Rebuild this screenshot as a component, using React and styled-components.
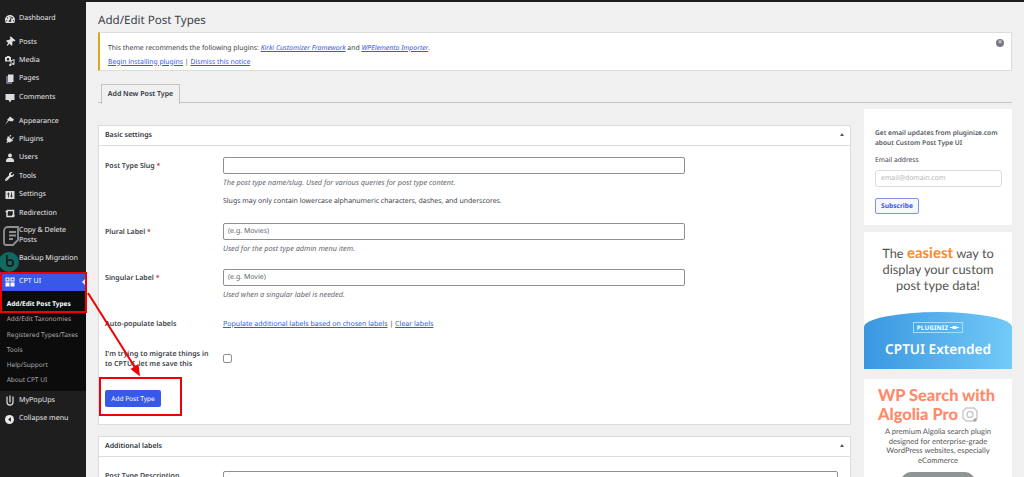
import styled, { createGlobalStyle } from 'styled-components';
import { FaTachometerAlt, FaThumbtack, FaWrench, FaPlug } from 'react-icons/fa';

const GlobalStyle = createGlobalStyle`
  html, body { margin: 0; padding: 0; background: #f0f0f1; }
  body { font-family: "Noto Sans", "Open Sans", sans-serif; color: #3c434a; text-rendering: geometricPrecision; }
  * { box-sizing: border-box; }
`;

const Page = styled.div`
  position: relative;
  width: 1024px;
  height: 477px;
  overflow: hidden;
  display: flex;
  flex-direction: column;
`;
const TopLine = styled.div`height: 2px; background: #1e1e1e; flex: none;`;
const Body = styled.div`display: flex; flex: 1; min-height: 0;`;

/* admin menu */
const Sidebar = styled.nav`
  width: 86px;
  flex: none;
  background: #1e1e1e;
  padding-top: 7.5px;
  font-size: 7.1px;
  color: #e8e8e9;
`;
const MenuItem = styled.div`
  display: flex;
  align-items: center;
  height: ${p => p.$h || 18.4}px;
  margin-top: ${p => p.$gap || 0}px;
  line-height: 9.6px;
  position: relative;
  background: ${p => (p.$active ? '#3858e9' : 'transparent')};
  color: ${p => (p.$active ? '#fff' : 'inherit')};
`;
const MenuLabel = styled.span`position: relative;`;
const IconSlot = styled.span`
  width: 19px;
  flex: none;
  display: flex;
  justify-content: center;
  color: #dcdcde;
  ${MenuItem}[data-active='true'] & { color: #fff; }
`;
const OversizeIcon = styled.svg`
  position: absolute;
  left: ${p => p.$left}px;
  top: ${p => p.$top}px;
`;
const ActiveNotch = styled.span`
  position: absolute;
  right: 0;
  top: 6px;
  border: 4px solid transparent;
  border-right-color: #f0f0f1;
  border-left-width: 0;
`;
const SubMenu = styled.div`
  background: #0c0c0c;
  height: 100px;
  padding: 4.8px 0 0 6.7px;
  color: #a9aaab;
  font-size: 6.5px;
`;
const SubItem = styled.div`
  height: 15.2px;
  line-height: 15.2px;
  white-space: nowrap;
  color: ${p => (p.$current ? '#fff' : 'inherit')};
  font-weight: ${p => (p.$current ? 700 : 400)};
`;
const PinIcon = styled(FaThumbtack)`transform: rotate(40deg);`;
const PlugIcon = styled(FaPlug)`transform: rotate(40deg);`;

/* content */
const Main = styled.main`
  flex: 1;
  min-width: 0;
  padding: 0 12px;
`;
const Title = styled.h1`
  margin: 0;
  height: 30px;
  padding-top: 10px;
  font-size: 11.6px;
  line-height: 18px;
  font-weight: 400;
  color: #3c434a;
`;
const Notice = styled.div`
  position: relative;
  height: 39px;
  background: #fff;
  border: 1px solid #dcdcde;
  border-left: 2px solid #dba617;
  padding: 8.5px 8px 0 8px;
  font-size: 6.85px;
  line-height: 14px;
`;
const Link = styled.a`
  color: #3858e9;
  text-decoration: underline;
  font-style: ${p => (p.$italic ? 'italic' : 'normal')};
`;
const NoticeClose = styled.span`
  position: absolute;
  right: 7px;
  top: 6px;
  width: 8px;
  height: 8px;
  border-radius: 50%;
  background: #787c82;
  color: #fff;
  font-size: 7px;
  line-height: 8px;
  text-align: center;
`;
const Tabs = styled.div`
  height: 32px;
  padding: 13px 0 0 3px;
  border-bottom: 1px solid #c3c4c7;
`;
const Tab = styled.div`
  width: 79px;
  height: 20px;
  background: #f0f0f1;
  border: 1px solid #c3c4c7;
  border-bottom: none;
  font-size: 7px;
  font-weight: 600;
  line-height: 19px;
  text-align: center;
  color: #2c3338;
`;
const Columns = styled.div`
  display: flex;
  gap: 13px;
  align-items: flex-start;
  margin-top: 6px;
`;
const FormColumn = styled.div`flex: 1; min-width: 0; padding-top: 16px;`;
const Panel = styled.section`
  background: #fff;
  border: 1px solid #dcdcde;
  margin-bottom: 11px;
  height: ${p => (p.$h ? `${p.$h}px` : 'auto')};
`;
const PanelHead = styled.div`
  position: relative;
  height: 20px;
  padding-left: 6px;
  border-bottom: 1px solid #dcdcde;
  font-size: 7px;
  font-weight: 600;
  line-height: 19px;
  color: #2c3338;
`;
const Toggle = styled.span`
  position: absolute;
  right: 6px;
  top: 7px;
  border: 2.5px solid transparent;
  border-top-width: 0;
  border-bottom: 3.5px solid #50575e;
`;
const PanelBody = styled.div`padding: ${p => p.$pt ?? 11}px 6px 0 6px;`;
const Row = styled.div`
  display: grid;
  grid-template-columns: 118px 1fr;
  margin-bottom: ${p => p.$mb || 0}px;
`;
const Label = styled.div`
  font-size: 7.05px;
  font-weight: 600;
  line-height: 10px;
  color: #3c434a;
  padding-top: ${p => p.$pt ?? 3.5}px;
`;
const Req = styled.span`color: #d63638;`;
const TextInput = styled.div`
  width: ${p => p.$w || 462}px;
  height: 17px;
  background: #fff;
  border: 1px solid #8c8f94;
  border-radius: 2px;
  padding-left: 4px;
  font-size: 7px;
  line-height: 15px;
  color: #646970;
`;
const Help = styled.div`
  font-size: 7.3px;
  font-style: italic;
  line-height: 10px;
  margin-top: 3.5px;
  color: #646970;
`;
const Plain = styled.div`
  font-size: 6.95px;
  line-height: 10px;
  margin-top: 9.5px;
  color: #3c434a;
`;
const LinkLine = styled.div`font-size: 7.05px; line-height: 10px;`;
const Check = styled.div`
  width: 9px;
  height: 9px;
  margin-top: 5px;
  border: 1px solid #8c8f94;
  border-radius: 2px;
`;
const PrimaryButton = styled.button`
  display: block;
  width: 56px;
  height: 17px;
  padding: 0;
  border: none;
  border-radius: 2px;
  background: #3858e9;
  color: #fff;
  font-family: inherit;
  font-size: 6.5px;
  text-rendering: geometricPrecision;
`;

/* right column */
const Aside = styled.aside`
  width: 148px;
  flex: none;
  display: flex;
  flex-direction: column;
`;
const Card = styled.div`
  background: #fff;
  height: ${p => p.$h}px;
  margin-bottom: ${p => p.$mb || 0}px;
  overflow: hidden;
`;
const SubscribeBox = styled(Card)`padding: 19px 11px 0 11px;`;
const SubscribeText = styled.div`
  font-size: 6.6px;
  font-weight: 600;
  line-height: 10px;
  white-space: nowrap;
  color: #50575e;
`;
const EmailLabel = styled.div`
  font-size: 6.7px;
  line-height: 10px;
  margin-top: 7px;
`;
const EmailInput = styled.div`
  width: 127px;
  height: 17px;
  margin-top: 5px;
  padding-left: 5px;
  border: 1px solid #dcdcde;
  border-radius: 3px;
  font-size: 6.9px;
  line-height: 15px;
  color: #b5b7ba;
`;
const SubscribeButton = styled.div`
  width: 44px;
  height: 16px;
  margin-top: 11px;
  border: 1px solid #7f92f0;
  border-radius: 2px;
  font-size: 6.6px;
  font-weight: 700;
  line-height: 14px;
  text-align: center;
  color: #3858e9;
  background: #f6f7f7;
`;
const PromoCard = styled(Card)`
  display: flex;
  flex-direction: column;
`;
const PromoText = styled.div`
  flex: 1;
  padding-top: 12.5px;
  font-family: "Lato", sans-serif;
  font-size: 12.8px;
  line-height: 16px;
  text-align: center;
  color: #555;
`;
const Easiest = styled.span`color: #f58b2e; font-weight: 700; font-size: 15px;`;
const Banner = styled.div`
  height: 57px;
  background: linear-gradient(90deg, #3a97e0, #72caf8);
  border-radius: 50% 50% 0 0 / 15px 15px 0 0;
  padding-top: 10px;
  display: flex;
  flex-direction: column;
  align-items: center;
  color: #fff;
`;
const Badge = styled.div`
  display: flex;
  align-items: center;
  gap: 2px;
  height: 11px;
  padding: 0 3px;
  border: 1px solid #a9dcf8;
  font-size: 6.2px;
  font-weight: 700;
  letter-spacing: 0.2px;
`;
const BannerTitle = styled.div`
  margin-top: 7px;
  font-size: 13.6px;
  line-height: 18px;
  font-weight: 600;
`;
const AlgoliaCard = styled(Card)`padding: 7px 0 0 14px;`;
const AlgoliaTitle = styled.div`
  display: flex;
  align-items: center;
  font-family: "Lato", sans-serif;
  font-weight: 900;
  font-size: 16.4px;
  line-height: 19px;
  white-space: nowrap;
  color: #ff8a6b;
  svg { margin-left: 4px; }
`;
const AlgoliaText = styled.div`
  margin: 3px 0 0 -5px;
  width: 130px;
  font-family: "Lato", sans-serif;
  font-size: 7.6px;
  line-height: 9.7px;
  text-align: center;
  color: #555;
`;
const AlgoliaButton = styled.div`
  width: 74px;
  height: 20px;
  margin: 6px 0 0 23px;
  border-radius: 10px 10px 0 0;
  background: #8f9494;
`;

/* red marks drawn on the screenshot */
const RedBox = styled.div`
  position: absolute;
  left: ${p => p.$x}px;
  top: ${p => p.$y}px;
  width: ${p => p.$w}px;
  height: ${p => p.$h}px;
  border: 2px solid #f00000;
`;
const ArrowLayer = styled.svg`
  position: absolute;
  left: 0;
  top: 0;
  pointer-events: none;
`;

const Glyph = ({ w = 10, h = 10, vb = '0 0 20 20', children }) => (
  <svg width={w} height={h} viewBox={vb} fill="currentColor">{children}</svg>
);
const MediaIcon = () => (
  <Glyph w={11} h={10}>
    <path fillRule="evenodd" d="M1 2h3l1-2h5l1 2h2v9H1zM7 4a2.500 2.500 0 1 0 0 5 2.500 2.500 0 0 0 0-5z" />
    <path d="M17 7l3-1v10a2.500 2 0 1 1-2-2V9l-4 1v8a2.500 2 0 1 1-2-2v-7z" />
  </Glyph>
);
const PagesIcon = () => (
  <Glyph>
    <path d="M3 4h2v13h9v2H3z" fill="#b9b6d6" />
    <path d="M6 1h11v15H6z" />
  </Glyph>
);
const CommentIcon = () => (
  <Glyph>
    <path d="M1 2h18v12h-6l-3 5-3-5H1z" />
  </Glyph>
);
const BrushIcon = () => (
  <Glyph w={11} h={10}>
    <path d="M11 1l8 6-3 4-3-1-2 1-2-2-8 9 6-10-2-1 3-2z" />
  </Glyph>
);
const UserIcon = () => (
  <Glyph>
    <circle cx="10" cy="5" r="4" />
    <path d="M2 18v-3c0-3 3-5 5-5h6c2 0 5 2 5 5v3z" />
  </Glyph>
);
const SettingsIcon = () => (
  <Glyph>
    <path d="M1 2h18v16H1zM6 5v2H4.500v2H6v6h1.500V9H9V7H7.500V5zm6 0v6h-1.500v2H12v2h1.500v-2H15v-2h-1.500V5z" fillRule="evenodd" />
  </Glyph>
);
const RedirectIcon = () => (
  <svg width="10" height="9" viewBox="0 0 20 18" fill="none" stroke="currentColor" strokeWidth="3">
    <path d="M4 3h13v12H4V3" />
    <path d="M1 5h5M14 13h5" />
  </svg>
);
const GridIcon = () => (
  <Glyph>
    <path d="M1 1h8v8H1zM3 3v4h4V3z" fillRule="evenodd" />
    <path d="M11 1h8v8h-8zM13 3v4h4V3z" fillRule="evenodd" />
    <path d="M1 11h8v8H1zM11 11h8v8h-8z" />
  </Glyph>
);
const UIcon = () => (
  <svg width="8" height="11" viewBox="0 0 16 22" fill="none" stroke="currentColor" strokeWidth="2.500">
    <path d="M2 3v11a6 6 0 0 0 12 0V3M8 1v14" />
  </svg>
);
const CollapseIcon = () => (
  <svg width="9" height="9" viewBox="0 0 20 20">
    <circle cx="10" cy="10" r="10" fill="#e8e8e9" />
    <path d="M13 5v10l-6-5z" fill="#1e1e1e" />
  </svg>
);

const topItems = [
  { label: 'Posts', icon: <PinIcon size={10} />, gap: 5.4 },
  { label: 'Media', icon: <MediaIcon /> },
  { label: 'Pages', icon: <PagesIcon /> },
  { label: 'Comments', icon: <CommentIcon /> },
  { label: 'Appearance', icon: <BrushIcon />, gap: 5.4 },
  { label: 'Plugins', icon: <PlugIcon size={9} /> },
  { label: 'Users', icon: <UserIcon /> },
  { label: 'Tools', icon: <FaWrench size={9} /> },
  { label: 'Settings', icon: <SettingsIcon /> },
  { label: 'Redirection', icon: <RedirectIcon /> },
];
const subItems = ['Add/Edit Taxonomies', 'Registered Types/Taxes', 'Tools', 'Help/Support', 'About CPT UI'];

export default function App() {
  return (
    <Page>
      <GlobalStyle />
      <TopLine />
      <Body>
        <Sidebar>
          <MenuItem><IconSlot><FaTachometerAlt size={10} /></IconSlot>Dashboard</MenuItem>
          {topItems.map(item => (
            <MenuItem key={item.label} $gap={item.gap}>
              <IconSlot>{item.icon}</IconSlot>{item.label}
            </MenuItem>
          ))}
          <MenuItem $h={26}>
            <OversizeIcon $left={3} $top={3} width="17" height="20" viewBox="0 0 17 20" fill="none" stroke="#8f9091" strokeWidth="1.800">
              <path d="M5 1h10v13l-5 5H3a2 2 0 0 1-2-2V5a4 4 0 0 1 4-4z" />
              <path d="M6 6h7M6 9.500h7M6 13h4" />
            </OversizeIcon>
            <IconSlot /><MenuLabel>Copy &amp; Delete<br />Posts</MenuLabel>
          </MenuItem>
          <MenuItem $h={18.4} $gap={1}>
            <OversizeIcon $left={0} $top={2} width="19" height="20" viewBox="0 0 19 20">
              <circle cx="9" cy="10" r="10" fill="#12695f" />
              <circle cx="10" cy="11" r="3.200" fill="none" stroke="#1e1e1e" strokeWidth="1.800" />
              <path d="M6.800 3v8" stroke="#1e1e1e" strokeWidth="1.800" />
            </OversizeIcon>
            <IconSlot /><MenuLabel>Backup Migration</MenuLabel>
          </MenuItem>
          <MenuItem $active data-active="true" $gap={4} $h={19.5}>
            <IconSlot><GridIcon /></IconSlot>CPT UI
            <ActiveNotch />
          </MenuItem>
          <SubMenu>
            <SubItem $current>Add/Edit Post Types</SubItem>
            {subItems.map(s => <SubItem key={s}>{s}</SubItem>)}
          </SubMenu>
          <MenuItem><IconSlot><UIcon /></IconSlot>MyPopUps</MenuItem>
          <MenuItem><IconSlot><CollapseIcon /></IconSlot>Collapse menu</MenuItem>
        </Sidebar>

        <Main>
          <Title>Add/Edit Post Types</Title>
          <Notice>
            This theme recommends the following plugins: <Link $italic>Kirki Customizer Framework</Link> and <Link $italic>WPElemento Importer</Link>.
            <br />
            <Link>Begin installing plugins</Link> | <Link>Dismiss this notice</Link>
            <NoticeClose>×</NoticeClose>
          </Notice>
          <Tabs><Tab>Add New Post Type</Tab></Tabs>
          <Columns>
            <FormColumn>
              <Panel $h={300}>
                <PanelHead>Basic settings<Toggle /></PanelHead>
                <PanelBody>
                  <Row $mb={16}>
                    <Label>Post Type Slug <Req>*</Req></Label>
                    <div>
                      <TextInput />
                      <Help>The post type name/slug. Used for various queries for post type content.</Help>
                      <Plain>Slugs may only contain lowercase alphanumeric characters, dashes, and underscores.</Plain>
                    </div>
                  </Row>
                  <Row $mb={15.5}>
                    <Label>Plural Label <Req>*</Req></Label>
                    <div>
                      <TextInput>(e.g. Movies)</TextInput>
                      <Help>Used for the post type admin menu item.</Help>
                    </div>
                  </Row>
                  <Row $mb={19}>
                    <Label>Singular Label <Req>*</Req></Label>
                    <div>
                      <TextInput>(e.g. Movie)</TextInput>
                      <Help>Used when a singular label is needed.</Help>
                    </div>
                  </Row>
                  <Row $mb={20}>
                    <Label $pt={0}>Auto-populate labels</Label>
                    <LinkLine><Link>Populate additional labels based on chosen labels</Link> | <Link>Clear labels</Link></LinkLine>
                  </Row>
                  <Row $mb={21}>
                    <Label $pt={0}>I'm trying to migrate things in<br />to CPTUI, let me save this</Label>
                    <div><Check /></div>
                  </Row>
                  <PrimaryButton>Add Post Type</PrimaryButton>
                </PanelBody>
              </Panel>
              <Panel>
                <PanelHead>Additional labels<Toggle /></PanelHead>
                <PanelBody $pt={14}>
                  <Row>
                    <Label $pt={0}>Post Type Description</Label>
                    <TextInput $w={615} />
                  </Row>
                </PanelBody>
              </Panel>
            </FormColumn>

            <Aside>
              <SubscribeBox $h={116} $mb={7}>
                <SubscribeText>Get email updates from pluginize.com<br />about Custom Post Type UI</SubscribeText>
                <EmailLabel>Email address</EmailLabel>
                <EmailInput>email@domain.com</EmailInput>
                <SubscribeButton>Subscribe</SubscribeButton>
              </SubscribeBox>
              <PromoCard $h={137} $mb={10}>
                <PromoText>
                  The <Easiest>easiest</Easiest> way to<br />display your custom<br />post type data!
                </PromoText>
                <Banner>
                  <Badge>PLUGINIZ
                    <svg width="9" height="5" viewBox="0 0 18 10" fill="#fff"><path d="M0 4h5V2h6a3 3 0 0 1 3 2h4v2h-4a3 3 0 0 1-3 2H5V6H0z" /></svg>
                  </Badge>
                  <BannerTitle>CPTUI Extended</BannerTitle>
                </Banner>
              </PromoCard>
              <AlgoliaCard $h={110}>
                <AlgoliaTitle>WP Search with</AlgoliaTitle>
                <AlgoliaTitle>
                  Algolia Pro
                  <svg width="16" height="16" viewBox="0 0 16 16" fill="none" stroke="#c9cbcb" strokeWidth="1.500">
                    <path d="M4 1h8l3 3v7l-3 3H4L1 11V4z" />
                    <circle cx="8" cy="7.500" r="3" />
                    <circle cx="13" cy="13" r="1.800" fill="#a5a7a7" stroke="none" />
                  </svg>
                </AlgoliaTitle>
                <AlgoliaText>A premium Algolia search plugin<br />designed for enterprise-grade<br />WordPress websites, especially<br />eCommerce</AlgoliaText>
                <AlgoliaButton />
              </AlgoliaCard>
            </Aside>
          </Columns>
        </Main>
      </Body>

      <RedBox $x={0} $y={272} $w={87} $h={41} />
      <RedBox $x={99} $y={377} $w={83} $h={39} />
      <ArrowLayer width="1024" height="477" viewBox="0 0 1024 477">
        <path d="M88 293L136 369" stroke="#f00000" strokeWidth="2" fill="none" />
        <path d="M140 376.500L130.500 369L138.500 364z" fill="#f00000" />
      </ArrowLayer>
    </Page>
  );
}
